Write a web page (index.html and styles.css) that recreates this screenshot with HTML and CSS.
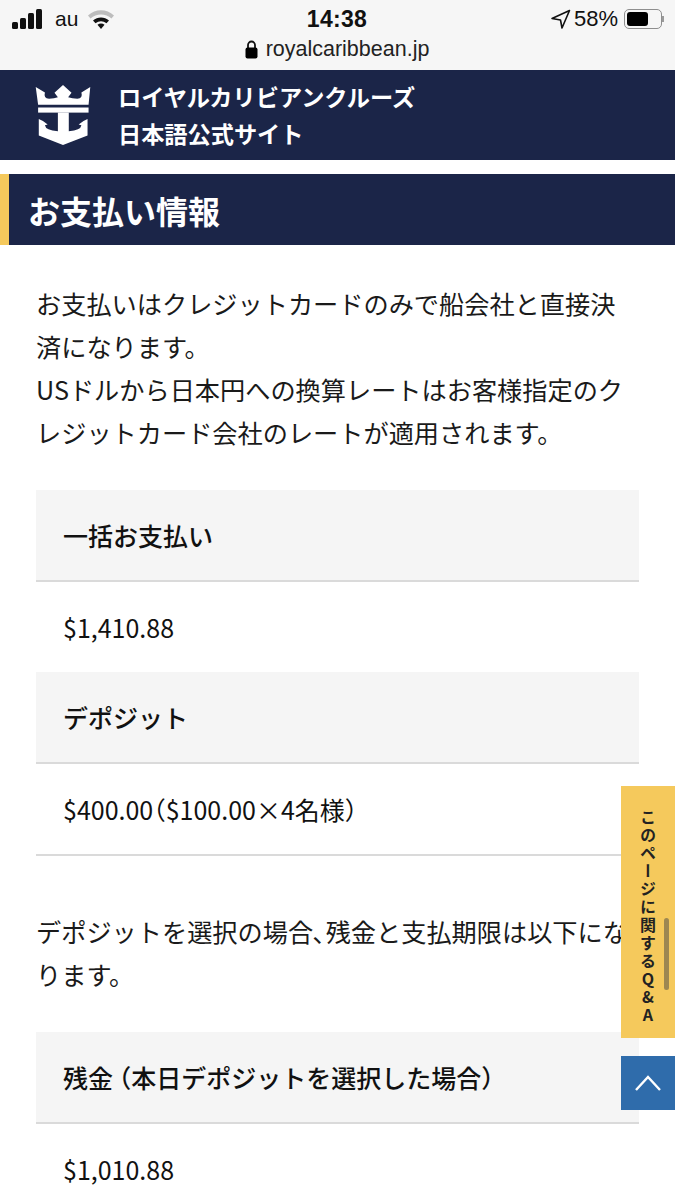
FILE: index.html
```html
<!DOCTYPE html>
<html lang="ja">
<head>
    <meta charset="UTF-8">
    <meta content="width=device-width, initial-scale=1.0" name="viewport">
    <title>お支払い情報</title>
    <link rel="stylesheet" href="styles.css">
</head>
<body>
<div class="browser-bar">
    <div class="status-row">
        <div class="status-left">
            <svg class="signal" width="31" height="20" viewBox="0 0 31 20">
                <rect x="0" y="13" width="6" height="7" rx="1.5"/>
                <rect x="8" y="9" width="6" height="11" rx="1.5"/>
                <rect x="16" y="4" width="6" height="16" rx="1.5"/>
                <rect x="24" y="0" width="6" height="20" rx="1.5"/>
            </svg>
            <span class="carrier">au</span>
            <svg class="wifi" width="28" height="20" viewBox="0 0 28 20">
                <path d="M1 6.500C8.500 -0.500 19.500 -0.500 27 6.500L24.500 9.500C18.500 4 9.500 4 3.500 9.500Z" fill="#bdbdbd"/>
                <path d="M6 11.500C10.500 7.500 17.500 7.500 22 11.500L19.500 14.300C16 11.500 12 11.500 8.500 14.300Z"/>
                <path d="M10.500 15.700C12.500 14 15.500 14 17.500 15.700L14 20Z"/>
            </svg>
        </div>
        <div class="status-time">14:38</div>
        <div class="status-right">
            <svg class="arrow" width="21" height="21" viewBox="0 0 21 21">
                <path d="M19.500 1.500L2 9.500L10.500 11L12 19Z" fill="none" stroke="#111" stroke-width="1.600" stroke-linejoin="round"/>
            </svg>
            <span class="battery-pct">58%</span>
            <div class="battery"><div class="battery-level"></div></div>
            <div class="battery-tip"></div>
        </div>
    </div>
    <div class="url-row">
        <svg width="13" height="19" viewBox="0 0 13 19">
            <path d="M3 8V5a3.500 3.500 0 0 1 7 0v3" fill="none" stroke="#111" stroke-width="1.800"/>
            <rect x="0.500" y="7.500" width="12" height="11" rx="2"/>
        </svg>
        <span class="url">royalcaribbean.jp</span>
    </div>
</div>

<header class="site-header">
    <svg class="logo" width="56" height="60" viewBox="33 22 160 176">
        <path d="M33 28L60 44Q55 62 72 62Q88 62 98 58L88 45L113 22L138 45L128 58Q140 62 155 62Q172 62 167 44L193 28L188 80H40Z" fill="#fff"/>
        <rect x="40" y="88" width="148" height="15" fill="#fff"/>
        <path d="M42 122Q58 128 68 138L60 140Q62 155 98 158V103H130V158Q165 155 167 140L159 138Q170 128 185 122V170L113 198L42 170Z" fill="#fff"/>
    </svg>
    <div class="site-name">ロイヤルカリビアンクルーズ<br>日本語公式サイト</div>
</header>

<h1 class="section-title">お支払い情報</h1>

<main class="content">
    <p class="text">お支払いはクレジットカードのみで船会社と直接決済になります。<br>USドルから日本円への換算レートはお客様指定のクレジットカード会社のレートが適用されます。</p>

    <dl class="pay-table">
        <dt>一括お支払い</dt>
        <dd class="no-line">$1,410.88</dd>
        <dt>デポジット</dt>
        <dd>$400.00<span class="half">（</span>$100.00×4名様<span class="half">）</span></dd>
    </dl>

    <p class="text text-wide">デポジットを選択の場合､残金と支払期限は以下になります。</p>

    <dl class="pay-table">
        <dt>残金 <span class="half">（</span>本日デポジットを選択した場合<span class="half">）</span></dt>
        <dd>$1,010.88</dd>
    </dl>
</main>

<a class="qa-tab">このページに関するQ&amp;A</a>
<div class="scroll-thumb"></div>
<a class="top-button">
    <svg width="28" height="18" viewBox="0 0 28 18">
        <path d="M2 16L14 3L26 16" fill="none" stroke="#fff" stroke-width="2.400"/>
    </svg>
</a>
</body>
</html>
```

FILE: styles.css
```css
html, body {
    margin: 0;
    padding: 0;
    height: 1200px;
    overflow: hidden;
}

body {
    position: relative;
    font-family: "Noto Sans CJK JP", "Noto Sans", sans-serif;
    color: #1a1a1a;
    background-color: #fff;
}

.browser-bar {
    height: 70px;
    background-color: #f6f6f6;
    box-sizing: border-box;
    padding: 5px 13px 0 12px;
    font-family: "Liberation Sans", Arial, sans-serif;
    color: #111;
}

.status-row {
    display: grid;
    grid-template-columns: 1fr auto 1fr;
    align-items: center;
    height: 28px;
}

.status-left {
    display: flex;
    align-items: center;
}

.status-left svg {
    fill: #111;
}

.carrier {
    font-size: 21px;
    margin: 0 9px 0 12px;
}

.status-time {
    font-size: 23px;
    font-weight: 700;
    letter-spacing: 0.3px;
}

.status-right {
    display: flex;
    align-items: center;
    justify-content: flex-end;
}

.battery-pct {
    font-size: 22px;
    margin: 0 6px 0 3px;
}

.battery {
    width: 38px;
    height: 20px;
    box-sizing: border-box;
    border: 1.5px solid #8e8e8e;
    border-radius: 5px;
    padding: 2px;
}

.battery-level {
    width: 21px;
    height: 100%;
    background-color: #000;
    border-radius: 3px;
}

.battery-tip {
    width: 2px;
    height: 6px;
    margin-right: -2px;
    background-color: #9a9a9a;
}

.url-row {
    display: flex;
    align-items: center;
    justify-content: center;
    gap: 8px;
    height: 30px;
    margin-top: 1px;
}

.url {
    font-size: 21.500px;
    color: #222;
}

.site-header {
    display: flex;
    align-items: center;
    height: 90px;
    padding-left: 35px;
    background-color: #1b2548;
}

.site-name {
    margin-left: 27px;
    color: #fff;
    font-size: 23.200px;
    font-weight: 700;
    line-height: 37px;
}

.section-title {
    margin: 14px 0 0;
    height: 71px;
    box-sizing: border-box;
    padding-left: 19px;
    border-left: 9px solid #f5c95c;
    background-color: #1b2548;
    color: #fff;
    font-size: 32px;
    font-weight: 700;
    line-height: 72px;
}

.content {
    padding: 37px 36px 0;
}

.text {
    margin: 0;
    font-size: 25.200px;
    line-height: 43px;
}

.text-wide {
    margin-top: 54px;
    margin-right: -2px;
}

.half {
    font-feature-settings: "halt";
}

.pay-table {
    margin: 36px 0 0;
}

.pay-table dt {
    height: 90px;
    padding-left: 27px;
    background-color: #f5f5f5;
    border-bottom: 2px solid #dadada;
    color: #111;
    font-size: 25px;
    font-weight: 500;
    line-height: 90px;
}

.pay-table dd {
    margin: 0;
    height: 90px;
    padding-left: 27px;
    border-bottom: 2px solid #dadada;
    color: #111;
    font-size: 25px;
    line-height: 90px;
}

.pay-table dd.no-line {
    border-bottom: none;
}

.qa-tab {
    position: absolute;
    top: 786px;
    right: 0;
    width: 54px;
    height: 252px;
    box-sizing: border-box;
    padding-top: 23px;
    background-color: #f5c95c;
    color: #222;
    font-size: 16px;
    font-weight: 700;
    letter-spacing: 2px;
    line-height: 54px;
    writing-mode: vertical-rl;
    text-orientation: upright;
}

.scroll-thumb {
    position: absolute;
    top: 918px;
    right: 6px;
    width: 5px;
    height: 72px;
    border-radius: 3px;
    background-color: rgba(70, 70, 70, 0.5);
}

.top-button {
    position: absolute;
    top: 1056px;
    right: 0;
    width: 54px;
    height: 54px;
    display: flex;
    align-items: center;
    justify-content: center;
    background-color: #2f6cab;
}
```
